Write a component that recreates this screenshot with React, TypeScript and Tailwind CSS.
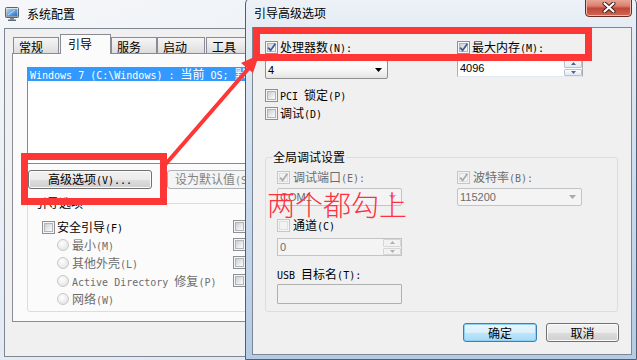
import React from "react";

const CJK = "font-['Noto_Sans_CJK_SC',sans-serif]";

function T({ s, c = "" }: { s: string; c?: string }) {
  const parts = s.split(/([\x20-\x7e]+)/).filter((p) => p.length > 0);
  return (
    <span className={`whitespace-pre leading-[14px] ${c}`}>
      {parts.map((p, i) =>
        /^[\x20-\x7e]+$/.test(p) ? (
          <span key={i} className="font-['DejaVu_Sans_Mono',monospace] text-[10px]">
            {p}
          </span>
        ) : (
          <span key={i} className="font-['Noto_Sans_CJK_SC',sans-serif] text-[12px]">
            {p}
          </span>
        )
      )}
    </span>
  );
}

function CB({ checked = false, disabled = false }: { checked?: boolean; disabled?: boolean }) {
  return (
    <span
      className={`relative flex h-[13px] w-[13px] shrink-0 items-center justify-center border ${
        disabled ? "border-[#c6c6c6] bg-[#f4f4f4]" : "border-[#8e8f8f] bg-[#f6f6f6]"
      }`}
    >
      <span
        className={`h-[9px] w-[9px] border ${
          disabled
            ? "border-[#dedede] bg-[#f2f2f2]"
            : "border-[#b1b4b8] bg-[linear-gradient(135deg,#c9ced4_0%,#eef0f2_70%,#fafafa_100%)]"
        }`}
      />
      {checked && (
        <svg className="absolute left-[0px] top-[0px]" width="11" height="11" viewBox="0 0 11 11">
          <path
            d="M2.2 5.6 L4.6 8.4 L9.3 1.8"
            fill="none"
            stroke={disabled ? "#a8a8a8" : "#3e5591"}
            strokeWidth="1.7"
          />
        </svg>
      )}
    </span>
  );
}

function RB() {
  return (
    <span className="h-[12px] w-[12px] shrink-0 rounded-full border border-[#c8c8c8] bg-[radial-gradient(circle_at_40%_35%,#ffffff_0%,#eeeeee_50%,#dcdcdc_100%)]" />
  );
}

function DownTri({ color }: { color: string }) {
  return (
    <svg width="7" height="4" viewBox="0 0 7 4">
      <path d="M0 0 H7 L3.5 4 Z" fill={color} />
    </svg>
  );
}

function Combo({ value, disabled = false, className = "" }: { value: string; disabled?: boolean; className?: string }) {
  return (
    <div
      className={`flex items-center justify-between rounded-[2px] border pl-[2px] pr-[5px] ${
        disabled
          ? "border-[#c2c4c6] bg-[#f4f4f4] text-[#6d6d6d]"
          : "border-[#8e8f8f] bg-[linear-gradient(180deg,#ffffff_0%,#f6f6f6_55%,#e4e4e4_100%)] text-black"
      } ${className}`}
    >
      <span className="font-['Liberation_Sans',sans-serif] text-[11px] leading-[14px]">{value}</span>
      <DownTri color={disabled ? "#a9a9a9" : "#000000"} />
    </div>
  );
}

function UpTriSmall({ color }: { color: string }) {
  return (
    <svg width="5" height="3" viewBox="0 0 5 3">
      <path d="M0 3 H5 L2.5 0 Z" fill={color} />
    </svg>
  );
}
function DownTriSmall({ color }: { color: string }) {
  return (
    <svg width="5" height="3" viewBox="0 0 5 3">
      <path d="M0 0 H5 L2.5 3 Z" fill={color} />
    </svg>
  );
}

function Spin({ value, disabled = false, className = "" }: { value: string; disabled?: boolean; className?: string }) {
  const tri = disabled ? "#b0b0b0" : "#4a6494";
  return (
    <div
      className={`flex border ${
        disabled ? "border-[#c2c4c6] bg-[#f4f4f4] text-[#6d6d6d]" : "border-[#abadb3] border-b-[#e3e9ef] bg-white text-black"
      } ${className}`}
    >
      <span className="flex flex-1 items-center pl-[2px] font-['Liberation_Sans',sans-serif] text-[11px] leading-[14px]">
        {value}
      </span>
      <div className="flex w-[18px] flex-col gap-[1px] p-[0px]">
        <span
          className={`flex flex-1 items-center justify-center rounded-[1px] border ${
            disabled ? "border-[#d6d6d6] bg-[#f2f2f2]" : "border-[#b8c3cf] bg-[linear-gradient(180deg,#fbfcfd,#e3e9ef)]"
          }`}
        >
          <UpTriSmall color={tri} />
        </span>
        <span
          className={`flex flex-1 items-center justify-center rounded-[1px] border ${
            disabled ? "border-[#d6d6d6] bg-[#f2f2f2]" : "border-[#b8c3cf] bg-[linear-gradient(180deg,#fbfcfd,#e3e9ef)]"
          }`}
        >
          <DownTriSmall color={tri} />
        </span>
      </div>
    </div>
  );
}

function Btn({
  children,
  className = "",
  def = false,
  disabled = false,
}: {
  children: React.ReactNode;
  className?: string;
  def?: boolean;
  disabled?: boolean;
}) {
  const look = def
    ? "border-[#3c7fb1] bg-[linear-gradient(180deg,#eaf6fd_0%,#d9f0fc_50%,#bee6fd_51%,#a7d9f5_100%)] shadow-[inset_0_0_0_1px_#8ed1f5] text-black"
    : disabled
    ? "border-[#adb2b5] bg-[#f4f4f4] text-[#838383]"
    : "border-[#707070] bg-[linear-gradient(180deg,#f2f2f2_0%,#ebebeb_50%,#dddddd_51%,#cfcfcf_100%)] shadow-[inset_0_0_0_1px_#fbfbfb] text-black";
  return (
    <div className={`flex items-center justify-center rounded-[3px] border ${look} ${className}`}>{children}</div>
  );
}

function Tab({ label, w, selected = false, ml = "" }: { label: string; w: string; selected?: boolean; ml?: string }) {
  return (
    <div
      className={`flex items-start border-x border-t border-[#898c95] ${w} ${ml} ${
        selected
          ? "relative z-10 -mb-[1px] h-[20px] bg-[#fbfbfb] pl-[7px] pt-[2px]"
          : "h-[16px] bg-[linear-gradient(180deg,#f5f5f5_0%,#eaeaea_50%,#dcdcdc_100%)] pl-[5px] pt-[2px]"
      }`}
    >
      <span className={`${CJK} text-[12px] leading-[13px] text-black`}>{label}</span>
    </div>
  );
}

function MonitorIcon() {
  return (
    <svg width="14" height="14" viewBox="0 0 14 14">
      <defs>
        <linearGradient id="scr" x1="0" y1="0" x2="1" y2="1">
          <stop offset="0" stopColor="#9fd3f7" />
          <stop offset="1" stopColor="#2a74c4" />
        </linearGradient>
        <linearGradient id="frm" x1="0" y1="0" x2="0" y2="1">
          <stop offset="0" stopColor="#e8ecf0" />
          <stop offset="1" stopColor="#8d98a4" />
        </linearGradient>
      </defs>
      <rect x="0.5" y="0.5" width="13" height="10" rx="1" fill="url(#frm)" stroke="#5b6570" />
      <rect x="2" y="2" width="10" height="7" fill="url(#scr)" />
      <path d="M3 8 L10 3" stroke="#ffffff" strokeOpacity="0.6" strokeWidth="1" />
      <rect x="5" y="11" width="4" height="1.5" fill="#7b8591" />
      <rect x="3" y="12.5" width="8" height="1.5" rx="0.5" fill="#5e6873" />
    </svg>
  );
}

function CloseBtn() {
  return (
    <div className="mr-[4px] flex h-[19px] w-[47px] items-center justify-center self-start rounded-b-[4px] border border-[#6b2a22] bg-[linear-gradient(180deg,#e9aa9c_0%,#dc8170_40%,#c2463a_55%,#cf6852_100%)] shadow-[inset_0_0_0_1px_#f0b9ad]">
      <svg width="14" height="11" viewBox="0 0 14 11">
        <path d="M2.5 1.5 L11.5 9.5 M11.5 1.5 L2.5 9.5" stroke="#3d1d18" strokeWidth="4" strokeLinecap="round" />
        <path d="M2.5 1.5 L11.5 9.5 M11.5 1.5 L2.5 9.5" stroke="#ffffff" strokeWidth="2.2" strokeLinecap="round" />
      </svg>
    </div>
  );
}

export default function App() {
  return (
    <div className="relative h-[360px] w-[637px] overflow-hidden bg-[linear-gradient(160deg,#f5f7fa_0%,#e9eef4_40%,#d9e3ee_100%)] text-black">
      {/* Left window: 系统配置 */}
      <div className="flex h-[28px] items-center gap-[8px] pl-[5px]">
        <MonitorIcon />
        <span className={`${CJK} text-[12px] leading-[14px] text-black`}>系统配置</span>
      </div>
      <div className="ml-[4px] h-[329px] w-[700px] border border-[#7d8894] bg-[#f0f0f0] pl-[7px] pt-[5px]">
        <div className="flex h-[19px] items-end pl-[1px]">
          <Tab label="常规" w="w-[46px]" />
          <Tab label="引导" w="w-[51px]" ml="ml-[1px]" selected />
          <Tab label="服务" w="w-[46px]" />
          <Tab label="启动" w="w-[48px]" />
          <Tab label="工具" w="w-[46px]" ml="ml-[1px]" />
        </div>
        <div className="h-[269px] w-[680px] border border-[#898c95] bg-[#fbfbfb] pl-[14px] pt-[13px]">
          {/* boot list */}
          <div className="h-[97px] w-[400px] border border-[#828790] bg-white">
            <div className="flex h-[13px] items-center bg-[#3399ff] pl-[2px] text-white">
              <T s={"Windows 7 (C:\\Windows) : 当前 OS; 默认 OS"} />
            </div>
          </div>
          {/* buttons */}
          <div className="mt-[6px] flex">
            <Btn className="ml-[1px] h-[19px] w-[124px]">
              <T s="高级选项(V)..." />
            </Btn>
            <Btn className="ml-[15px] h-[19px] w-[94px]" disabled>
              <T s="设为默认值(S)" />
            </Btn>
            <Btn className="ml-[8px] h-[19px] w-[80px]" disabled>
              <T s="删除(D)" />
            </Btn>
          </div>
          {/* boot options group */}
          <fieldset className="mt-[7px] h-[116px] w-[400px] rounded-[3px] border border-[#d5dfe5]">
            <legend className="ml-[5px] px-[2px] text-[12px] leading-[14px]">
              <T s="引导选项" />
            </legend>
            <div className="flex pl-[14px] pt-[6px]">
              <div className="flex w-[191px] flex-col">
                <div className="flex h-[19px] items-center gap-[2px] pt-[1px]">
                  <CB />
                  <T s="安全引导(F)" />
                </div>
                {["最小(M)", "其他外壳(L)", "Active Directory 修复(P)", "网络(W)"].map((l) => (
                  <div key={l} className="flex h-[18px] items-center gap-[3px] pl-[15px] text-[#6d6d6d]">
                    <RB />
                    <T s={l} />
                  </div>
                ))}
              </div>
              <div className="flex flex-col">
                {["无 GUI 引导(N)", "引导日志(B)", "基本视频(E)", "OS 引导信息(O)"].map((l) => (
                  <div key={l} className="flex h-[18px] items-center gap-[2px]">
                    <CB />
                    <T s={l} />
                  </div>
                ))}
              </div>
            </div>
          </fieldset>
        </div>
      </div>

      {/* Right window: 引导高级选项 */}
      <div className="absolute left-[245px] top-[-3px] flex h-[363px] w-[392px] flex-col rounded-t-[7px] border border-[#4f6074] bg-[linear-gradient(180deg,#edf2f7_0%,#e4ebf3_9%,#c9daee_55%,#b4cbe6_100%)]">
        <div className="flex h-[29px] items-center justify-between pl-[8px]">
          <span className={`${CJK} text-[12px] leading-[14px] text-black`}>引导高级选项</span>
          <CloseBtn />
        </div>
        <div className="ml-[6px] h-[328px] w-[380px] border border-[#7d8894] bg-[#f0f0f0]">
          <div className="flex pl-[12px] pt-[13px]">
            <div className="flex w-[192px] flex-col items-start">
              <div className="flex h-[13px] items-center gap-[2px]">
                <CB checked />
                <T s="处理器数(N):" />
              </div>
              <Combo value="4" className="mt-[6px] h-[19px] w-[123px]" />
              <div className="mt-[10px] flex h-[13px] items-center gap-[2px]">
                <CB />
                <T s="PCI 锁定(P)" />
              </div>
              <div className="mt-[5px] flex h-[13px] items-center gap-[2px]">
                <CB />
                <T s="调试(D)" />
              </div>
            </div>
            <div className="flex flex-col items-start">
              <div className="flex h-[13px] items-center gap-[2px]">
                <CB checked />
                <T s="最大内存(M):" />
              </div>
              <Spin value="4096" className="mt-[5px] h-[18px] w-[126px]" />
            </div>
          </div>
          <fieldset className="ml-[12px] mt-[30px] h-[162px] w-[353px] rounded-[3px] border border-[#d5dfe5]">
            <legend className="ml-[6px] px-[1px] text-[12px] leading-[14px]">
              <T s="全局调试设置" />
            </legend>
            <div className="flex pl-[11px] pt-[6px]">
              <div className="flex w-[180px] flex-col items-start">
                <div className="flex h-[13px] items-center gap-[3px] text-[#6d6d6d]">
                  <CB checked disabled />
                  <T s="调试端口(E):" />
                </div>
                <Combo value="COM1" disabled className="mt-[4px] h-[18px] w-[125px]" />
                <div className="mt-[13px] flex h-[13px] items-center gap-[3px]">
                  <CB disabled />
                  <T s="通道(C)" />
                </div>
                <Spin value="0" disabled className="mt-[6px] h-[18px] w-[125px]" />
                <div className="mt-[11px] flex h-[14px] items-center">
                  <T s="USB 目标名(T):" />
                </div>
                <div className="mt-[3px] h-[20px] w-[125px] rounded-[1px] border border-[#b0b0b0] bg-[#f0f0f0]" />
              </div>
              <div className="flex flex-col items-start">
                <div className="flex h-[13px] items-center gap-[3px] text-[#6d6d6d]">
                  <CB checked disabled />
                  <T s="波特率(B):" />
                </div>
                <Combo value="115200" disabled className="mt-[4px] h-[18px] w-[125px]" />
              </div>
            </div>
          </fieldset>
          <div className="mt-[11px] flex justify-end gap-[9px] pr-[12px]">
            <Btn def className="h-[19px] w-[74px]">
              <T s="确定" />
            </Btn>
            <Btn className="h-[19px] w-[73px]">
              <T s="取消" />
            </Btn>
          </div>
        </div>
      </div>

      {/* Red annotations */}
      <svg className="pointer-events-none absolute left-0 top-0" width="637" height="360" viewBox="0 0 637 360">
        <rect x="24.5" y="156.5" width="139" height="45" fill="none" stroke="#fd3636" strokeWidth="7" />
        <rect x="256.5" y="30.5" width="332" height="27" fill="none" stroke="#fd3636" strokeWidth="7" />
        <line x1="164" y1="166" x2="249" y2="68" stroke="#fd3636" strokeWidth="4" />
        <polygon points="259,55 253,73 241,63" fill="#fd3636" />
      </svg>
      <div className="pointer-events-none absolute left-[267px] top-[190px] font-['Noto_Sans_CJK_SC',sans-serif] text-[28px] font-[200] leading-[28px] text-[#ff3040]">
        两个都勾上
      </div>
    </div>
  );
}
